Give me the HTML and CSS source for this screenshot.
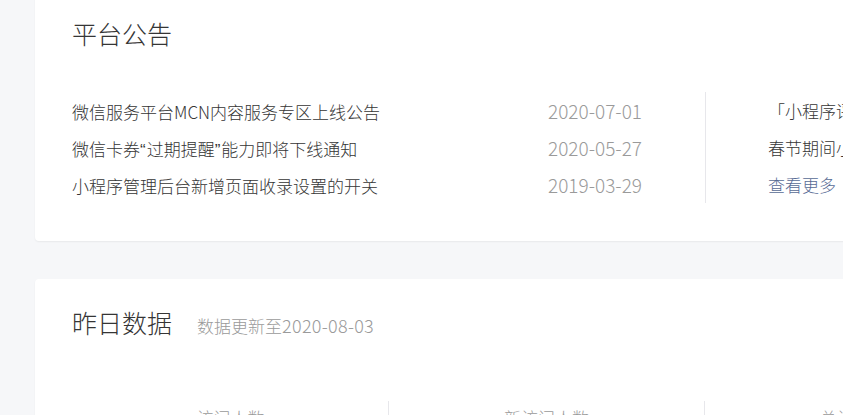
FILE: index.html
```html
<!DOCTYPE html>
<html>

<head>
    <meta charset="utf-8">
    <link rel="stylesheet" href="styles.css">
</head>

<body>
    <div class="page">
        <section class="card notice">
            <h2 class="card-title">平台公告</h2>
            <div class="notice-body">
                <ul class="notice-list">
                    <li><span>微信服务平台MCN内容服务专区上线公告</span><span class="date">2020-07-01</span></li>
                    <li><span>微信卡券<span class="q">“</span>过期提醒<span class="q">”</span>能力即将下线通知</span><span class="date">2020-05-27</span></li>
                    <li><span>小程序管理后台新增页面收录设置的开关</span><span class="date">2019-03-29</span></li>
                </ul>
                <ul class="notice-side">
                    <li>「小程序评测」能力即将上线</li>
                    <li>春节期间小程序审核安排通知</li>
                    <li><a href="#">查看更多</a></li>
                </ul>
            </div>
        </section>

        <section class="card stats">
            <h2 class="card-title">昨日数据<small>数据更新至<span class="num">2020-08-03</span></small></h2>
            <div class="stat-row">
                <div class="stat">访问人数</div>
                <div class="stat">新访问人数</div>
                <div class="stat">总访问人数</div>
            </div>
        </section>
    </div>
</body>

</html>
```

FILE: styles.css
```css
html,
body {
    margin: 0;
    padding: 0;
    height: 100%;
    overflow: hidden;
    background: #f6f7f9;
    font-family: "Noto Sans CJK SC", "Liberation Sans", sans-serif;
    font-weight: 300;
    color: #353535;
}

ul {
    list-style: none;
    margin: 0;
    padding: 0;
}

.page {
    margin: -10px 0 0 35px;
    width: 1200px;
    display: flex;
    flex-direction: column;
    gap: 38px;
}

.card {
    background: #fff;
    border-radius: 4px;
    box-shadow: 0 1px 2px rgba(0, 0, 0, 0.06);
    padding: 25px 0 38px 37px;
}

.card-title {
    margin: 0;
    font-size: 25px;
    font-weight: 300;
    line-height: 36px;

    & small {
        margin-left: 25px;
        font-size: 17px;
        color: #9a9a9a;
    }

    & .num {
        font-size: 18px;
        letter-spacing: 0.3px;
    }
}

.notice-body {
    display: flex;
    margin-top: 41px;
    font-size: 17px;
    line-height: 37px;
}

.notice-list {
    width: 570px;
    padding-right: 63px;
    border-right: 1px solid #e7e7eb;

    & li {
        display: flex;
        justify-content: space-between;
        align-items: baseline;
        height: 37px;
    }

    & .q {
        font-family: "Liberation Sans", sans-serif;
        letter-spacing: 1px;
    }

    & .date {
        font-size: 19px;
        color: #9a9a9a;
    }
}

.notice-side {
    padding-left: 62px;
    white-space: nowrap;

    & a {
        color: #576b95;
        text-decoration: none;
    }
}

.stats {
    padding-bottom: 60px;
}

.stat-row {
    display: flex;
    margin-top: 57px;
    margin-left: 1px;
}

.stat {
    width: 315px;
    text-align: center;
    font-size: 17px;
    line-height: 24px;
    padding-top: 5px;
    color: #9a9a9a;
    border-right: 1px solid #e7e7eb;
}
```
